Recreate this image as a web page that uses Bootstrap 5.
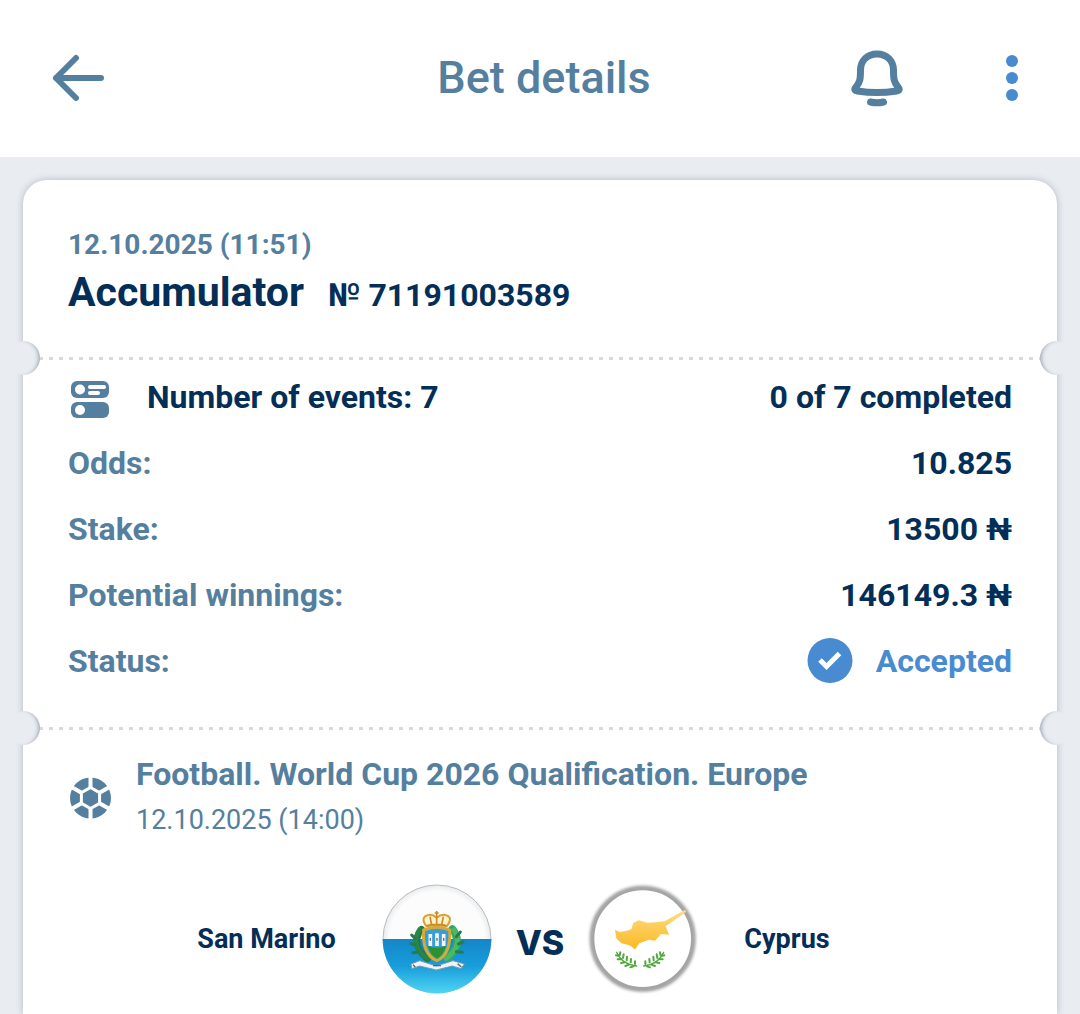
<!DOCTYPE html>
<html lang="en">
<head>
<meta charset="utf-8">
<meta name="viewport" content="width=device-width, initial-scale=1">
<title>Bet details</title>
<link href="https://cdn.jsdelivr.net/npm/bootstrap@5.3.0/dist/css/bootstrap.min.css" rel="stylesheet">
<style>
:root { --page: #e9edf2; --steel: #557f9f; --navy: #022e57; --sky: #488bd1; }
body { background: var(--page); color: var(--navy); font-family: Roboto, "Liberation Sans", sans-serif; }
.topbar { display: grid; grid-template-columns: 1fr auto 1fr; align-items: center; height: 157px; padding: 0 44px 2px 52px; background: #fff; color: var(--steel); }
.topbar h1 { font-size: 45px; line-height: 56px; font-weight: 500; }
.tool { color: inherit; background: none; border: 0; padding: 0; display: block; }
.tool svg { display: block; }
.tools { gap: 84px; }
.ticket { margin: 23px 23px 0; background: #fff; border-radius: 24px 24px 0 0; box-shadow: 0 0 7px rgba(70, 82, 96, .34); }
.part { padding: 0 45px; }
.part-head { padding-top: 45px; padding-bottom: 35px; }
.placed { font-size: 28px; line-height: 40px; font-weight: 700; color: var(--steel); }
.kind { font-size: 41px; line-height: 54px; font-weight: 700; }
.serial { font-size: 32px; line-height: 54px; font-weight: 700; }
.tear { position: relative; height: 3px; margin: 0 16px; background: repeating-linear-gradient(90deg, #d9dade 0 4px, transparent 4px 10px); }
.tear::before, .tear::after { content: ""; position: absolute; top: -16px; width: 34px; height: 34px; border-radius: 50%; background: var(--page); }
.tear::before { left: -33px; box-shadow: inset -4px 0 4px -3px rgba(60, 75, 95, .5); }
.tear::after { right: -33px; box-shadow: inset 4px 0 4px -3px rgba(60, 75, 95, .5); }
.part-sum { padding-top: 4px; padding-bottom: 33px; font-size: 32px; line-height: 66px; }
.part-sum dt { font-weight: 700; color: var(--steel); }
.part-sum dd { margin: 0; font-weight: 700; }
.part-sum dt.strong { color: var(--navy); gap: 37px; }
.part-sum dd.accepted { color: var(--sky); gap: 23px; }
.part-event { padding-top: 20px; padding-bottom: 20px; }
.event-head { gap: 24px; color: var(--steel); }
.event-head h2 { font-size: 32px; line-height: 48px; font-weight: 700; }
.event-head time { font-size: 27px; line-height: 44px; display: block; }
.match-up { display: grid; grid-template-columns: 1fr 110px auto 110px 1fr; align-items: center; margin-top: 42px; }
.team { font-size: 27px; line-height: 36px; font-weight: 700; margin: 0 46px; }
.versus { font-family: Inter, Roboto, sans-serif; font-size: 34px; line-height: 40px; font-weight: 800; padding: 8px 24px 0; }
</style>
<script src="https://cdn.jsdelivr.net/npm/bootstrap@5.3.0/dist/js/bootstrap.bundle.min.js"></script>
</head>
<body class="d-flex flex-column min-vh-100">
<header class="topbar">
  <button class="tool me-auto" type="button" aria-label="Back">
    <svg width="54" height="48" viewBox="0 0 54 48" fill="none" stroke="currentColor" stroke-width="6" stroke-linecap="round" stroke-linejoin="round"><path d="M24 4 4 24l20 20M4 24h45"/></svg>
  </button>
  <h1 class="m-0">Bet details</h1>
  <div class="tools d-flex align-items-center justify-content-end">
    <button class="tool" type="button" aria-label="Notifications">
      <svg width="54" height="58" viewBox="0 0 54 58" fill="none" stroke="currentColor" stroke-width="7" stroke-linejoin="round"><path d="M27 5C17 5 10.500 12 10.500 21C10.500 30 10 33.500 6 38C4 40.500 4.500 41.500 7.500 42C20 44 34 44 46.500 42C49.500 41.500 50 40.500 48 38C44 33.500 43.500 30 43.500 21C43.500 12 37 5 27 5Z"/><path d="M20.500 53q6.500 1.500 13 0" stroke-linecap="round"/></svg>
    </button>
    <button class="tool" type="button" aria-label="More options">
      <svg width="48" height="54" viewBox="0 0 48 54" fill="#488bd1"><circle cx="24" cy="10" r="6"/><circle cx="24" cy="27" r="6"/><circle cx="24" cy="44" r="6"/></svg>
    </button>
  </div>
</header>
<main class="flex-grow-1 d-flex flex-column">
<article class="ticket flex-grow-1">
  <section class="part part-head">
    <time class="placed d-block">12.10.2025 (11:51)</time>
    <div class="d-flex align-items-baseline gap-4"><span class="kind">Accumulator</span><span class="serial">№ 71191003589</span></div>
  </section>
  <div class="tear"></div>
  <dl class="part part-sum m-0">
    <div class="d-flex justify-content-between">
      <dt class="strong d-flex align-items-center">
        <svg class="mt-1" width="42" height="42" viewBox="0 0 42 42"><g fill="#557f9f"><rect x="3" y="3" width="38" height="17" rx="6"/><rect x="3" y="24" width="38" height="16" rx="6"/></g><g fill="#fff"><circle cx="12" cy="11.500" r="5"/><circle cx="12" cy="32" r="5"/><rect x="20" y="7" width="18" height="4" rx="2"/><rect x="20" y="13" width="12" height="4" rx="2"/></g></svg>
        Number of events: 7</dt>
      <dd>0 of 7 completed</dd>
    </div>
    <div class="d-flex justify-content-between"><dt>Odds:</dt><dd>10.825</dd></div>
    <div class="d-flex justify-content-between"><dt>Stake:</dt><dd>13500 ₦</dd></div>
    <div class="d-flex justify-content-between"><dt>Potential winnings:</dt><dd>146149.3 ₦</dd></div>
    <div class="d-flex justify-content-between">
      <dt>Status:</dt>
      <dd class="accepted d-flex align-items-center">
        <svg width="46" height="46" viewBox="0 0 46 46"><circle cx="23" cy="22.500" r="22.500" fill="#488bd1"/><path d="m13 22 6.500 6.500L32.500 15.500" fill="none" stroke="#fff" stroke-width="5"/></svg>
        Accepted</dd>
    </div>
  </dl>
  <div class="tear"></div>
  <section class="part part-event">
    <div class="event-head d-flex align-items-center">
      <svg class="mt-1" width="44" height="44" viewBox="0 0 44 44"><circle cx="22.500" cy="22" r="20.500" fill="currentColor"/><g fill="none" stroke="#fff" stroke-width="3"><path d="M22.500 11.500 31.600 16.700v10.600L22.500 32.500 13.400 27.300V16.700Z"/><path stroke-width="4" d="M22.500 0v12M22.500 32v12M31.500 16.800 42 10.700M31.500 27.200 42 33.300M13.500 16.800 3 10.700M13.500 27.200 3 33.300"/></g></svg>
      <div><h2 class="m-0">Football. World Cup 2026 Qualification. Europe</h2><time>12.10.2025 (14:00)</time></div>
    </div>
    <div class="match-up">
      <span class="team text-end">San Marino</span>
      <svg width="110" height="110" viewBox="39 42 330 330" role="img" aria-label="San Marino flag">
        <defs>
          <linearGradient id="sea" x1="0" y1="0" x2="0" y2="1"><stop offset="0" stop-color="#1386c8"/><stop offset=".5" stop-color="#189ddb"/><stop offset="1" stop-color="#4fd5f3"/></linearGradient>
          <radialGradient id="pearl"><stop offset=".88" stop-color="#fcfcfc"/><stop offset="1" stop-color="#e9ebed"/></radialGradient>
        </defs>
        <circle cx="204" cy="207" r="162" fill="url(#pearl)" stroke="#b9bdc0" stroke-width="3"/>
        <path d="M41 207a163 163 0 0 0 326 0Z" fill="url(#sea)"/>
        <path d="M126 282l26-10 50 16 50-16 34 10-10 14-26-8-48 12-50-12-24 8Z" fill="#eef3f6" stroke="#7d99ab" stroke-width="3"/>
        <g fill="none" stroke-linecap="round"><path d="M158 178q-36 46 20 90" stroke="#22773f" stroke-width="20" stroke-dasharray="7 12"/><path d="M152 178q-32 46 24 88" stroke="#2b8449" stroke-width="14"/><path d="M250 178q36 46-20 90" stroke="#37a65c" stroke-width="24" stroke-dasharray="8 14"/><path d="M255 180q30 44-24 86" stroke="#47b969" stroke-width="14"/></g>
        <path d="M138 205l-10-10M139 225l-14-4M148 246l-16 2M262 200l12-14M268 222l14-6M262 245l18 2" stroke="#277d42" stroke-width="9" stroke-linecap="round"/>
        <path d="M164 180q40-17 78 0c4 42-8 80-38 92-32-12-44-50-40-92Z" fill="#3a9dd3" stroke="#d9a936" stroke-width="9"/>
        <path d="M175 226q29 15 57 0-8 30-28 40-20-10-29-40Z" fill="#2d922e"/>
        <path d="M184 192v36M204 190v38M224 192v36" stroke="#eff5f8" stroke-width="11"/><path d="M184 204v8M204 204v8M224 204v8" stroke="#50708b" stroke-width="4"/>
        <path d="M172 169q-18-26 2-33 16-5 29 7 14-12 30-7 20 7 0 33-30-7-61 0Z" fill="#fff1c8" stroke="#d5a235" stroke-width="6"/>
        <path d="M203 140v26M183 140l5 25M223 140l-5 25M174 167q29-8 58 0M203 123v17M197 129h12" fill="none" stroke="#c88d28" stroke-width="5"/>
        <path d="M132 284l7 7M266 281l11 10M192 287h24" stroke="#51677a" stroke-width="4"/>
      </svg>
      <span class="versus">VS</span>
      <svg width="110" height="110" viewBox="651 42 330 330" role="img" aria-label="Cyprus flag" overflow="visible">
        <defs>
          <filter id="halo" x="-20%" y="-20%" width="140%" height="140%"><feGaussianBlur stdDeviation="5"/></filter>
          <filter id="rim" x="-20%" y="-20%" width="140%" height="140%"><feGaussianBlur stdDeviation="2"/></filter>
          <linearGradient id="copper" x1="0" y1="0" x2="0" y2="1"><stop offset="0" stop-color="#ffdc83"/><stop offset="1" stop-color="#f9b923"/></linearGradient>
        </defs>
        <circle cx="815" cy="206" r="152" fill="#fff" stroke="#9c9c9c" stroke-width="14" filter="url(#halo)"/>
        <circle cx="815" cy="206" r="148" fill="#fff" stroke="#a4a4a4" stroke-width="6" filter="url(#rim)"/>
        <path d="M732 179l14 7 22-4 14-5 4-17 17-9 26 7 24-1 28-3 60-34 5 5-62 44 10 25-24-2-18 20-18-3-29 11-13 18-16-12-25-6-15-15Z" fill="url(#copper)"/>
        <g fill="none" stroke="#50a83d" stroke-width="4" stroke-linecap="round"><path d="M737 247q16 37 60 41M878 247q-16 37-60 41"/><path stroke-width="6" d="M741 257l-6-1M746 256l2-9M750 268l-10 0M756 264l2-11M761 277l-11 2M767 271l1-11M774 284l-11 4M779 277l1-10M787 289l-9 3M792 282l0-8M874 257l6-1M869 256l-2-9M865 268l10 0M859 264l-2-11M854 277l11 2M848 271l-1-11M841 284l11 4M836 277l-1-10M828 289l9 3M823 282l0-8"/></g>
      </svg>
      <span class="team">Cyprus</span>
    </div>
  </section>
</article>
</main>
</body>
</html>
